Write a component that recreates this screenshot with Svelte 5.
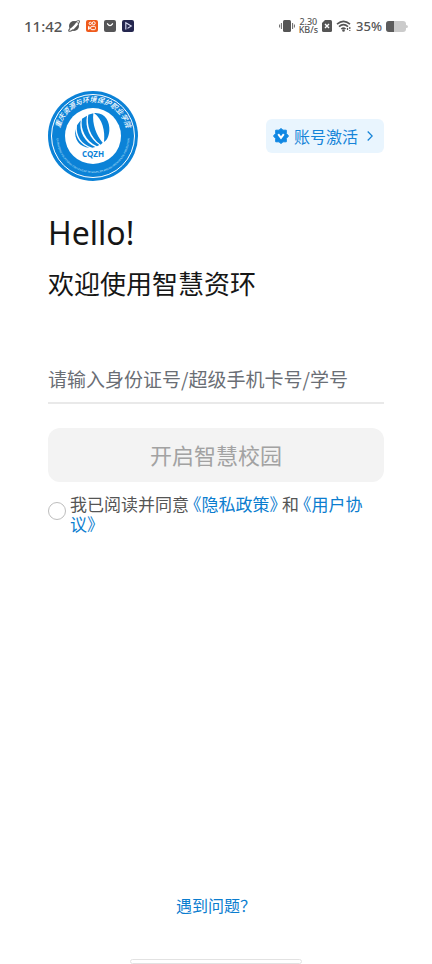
<script>
  let account = $state('');
  let agreed = $state(false);
  let ready = $derived(agreed && account.trim().length > 0);
</script>

<div class="screen">
  <header class="status">
    <div class="group">
      <span class="time">11:42</span>
      <svg width="12" height="12" viewBox="0 0 12 12" aria-hidden="true">
        <circle cx="6" cy="6" r="5" fill="#555" />
        <path d="M2 10Q5.500 8.500 9.500 3" fill="none" stroke="#fff" stroke-width="2.600" />
        <path d="M2 8.300Q.2 10.500.9 11.100 2 11.900 5 9.700M7.300 1.900Q10.800.1 11.300.9 11.800 1.700 10 4.400" fill="none" stroke="#555" stroke-width="1.100" />
      </svg>
      <svg width="12" height="12" viewBox="0 0 12 12" aria-hidden="true">
        <rect width="12" height="12" rx="2" fill="#ef5a1c" />
        <g fill="none" stroke="#fff"><circle cx="4.300" cy="3.400" r="1.200" /><circle cx="7.700" cy="3.200" r="1.500" /><rect x="4.800" y="6.300" width="4.600" height="3.400" rx="1" /><path d="M2.500 6.400v3l2-1.500z" /></g>
      </svg>
      <svg width="12" height="12" viewBox="0 0 12 12" aria-hidden="true">
        <rect width="12" height="12" rx="2" fill="#555557" />
        <path d="M3.500 3.800Q6 7.300 8.500 3.800" fill="none" stroke="#fff" stroke-width="1.300" stroke-linecap="round" />
      </svg>
      <svg width="12" height="12" viewBox="0 0 12 12" aria-hidden="true">
        <rect width="12" height="12" rx="2" fill="#24264f" />
        <path d="M3.800 9.500V2.800L9.300 6 5.500 8.400" fill="none" stroke="#d9dcf4" stroke-width="1.100" />
      </svg>
    </div>
    <div class="group right">
      <svg width="16" height="14" viewBox="0 0 16 14" aria-hidden="true">
        <rect x="4" y="1" width="8" height="12" rx="1.500" fill="#555" />
        <path d="M2.400 4v6M.6 5.500v3M13.600 4v6M15.400 5.500v3" stroke="#666" />
      </svg>
      <span class="speed"><b>2.30</b><b>KB/s</b></span>
      <svg width="10" height="12" viewBox="0 0 10 12" aria-hidden="true">
        <path d="M3 0h5.500Q10 0 10 1.500v9Q10 12 8.500 12h-7Q0 12 0 10.500V3z" fill="#555" />
        <path d="M3 4l4 4M7 4L3 8" stroke="#fff" stroke-width="1.400" />
      </svg>
      <svg width="16" height="12" viewBox="0 0 16 12" aria-hidden="true">
        <path d="M1 4.200Q7.500-1.500 14 4.200M3 6.700Q7.500 2.700 12 6.700M5.300 9Q7.500 7.200 9.500 9" fill="none" stroke="#555" stroke-width="1.600" />
        <circle cx="7.500" cy="10.500" r="1.300" fill="#555" />
        <path d="M11.500 8v3M13.800 7v4" stroke="#555" stroke-width="1.200" stroke-dasharray="2 1" />
      </svg>
      <span class="percent">35%</span>
      <svg width="22" height="11" viewBox="0 0 22 11" aria-hidden="true">
        <rect width="20" height="11" rx="3" fill="#cbcbcb" />
        <path d="M3 0h5v11H3Q0 11 0 8V3Q0 0 3 0" fill="#5c5c5c" />
        <path d="M20 4q2 0 2 1.500T20 7z" fill="#cbcbcb" />
      </svg>
    </div>
  </header>

  <main>
    <div class="brand">
      <svg width="90" height="90" viewBox="0 0 180 180" role="img" aria-label="CQZH">
        <defs>
          <path id="arc-top" d="M25 110A68 68 0 1 1 155 110" />
          <path id="arc-bottom" d="M19 74A73 73 0 1 0 161 74" />
        </defs>
        <circle cx="90" cy="90" r="90" fill="#0b82d7" />
        <circle cx="90" cy="90" r="83" fill="none" stroke="#fff" stroke-width="2" />
        <circle cx="90" cy="90" r="56" fill="#fff" />
        <text class="ring-cn"><textPath href="#arc-top" startOffset="50%" text-anchor="middle">重庆资源与环境保护职业学院</textPath></text>
        <text class="ring-en"><textPath href="#arc-bottom" startOffset="50%" text-anchor="middle">CHONGQING VOCATIONAL COLLEGE OF RESOURCES AND ENVIRONMENTAL PROTECTION</textPath></text>
        <g transform="translate(-16 -14) scale(.66667)" fill="#0b82d7">
          <path d="M162 87C195 84 210 112 208 140 206 160 200 168 192 174 196 140 187 105 162 87z" />
          <path d="M145 92L160 88C156 120 169 155 188 176L182 182C150 160 139 120 145 92z" />
          <path d="M126 104L141 95C134 130 150 165 178 183L171 187C137 170 120 135 126 104z" />
          <path d="M111 124L122 109C116 145 135 175 166 189L157 191C124 182 107 155 111 124z" />
          <path d="M106 135C108 165 124 182 148 191 120 190 101 167 106 135z" />
        </g>
        <text class="logo-name" x="90" y="132" text-anchor="middle">CQZH</text>
      </svg>
      <button class="activate" type="button">
        <svg width="16" height="16" viewBox="0 0 16 16" aria-hidden="true">
          <path d="M8 .5l2 1.700h3.300V5.500L15.500 8l-2.200 2.500v3.300H10L8 15.500l-2-1.700H2.700v-3.300L.5 8l2.200-2.500V2.200H6z" fill="#0f87e3" stroke="#0f87e3" stroke-linejoin="round" />
          <path d="M5.200 6.200L8 9.800l2.800-3.600" fill="none" stroke="#fff" stroke-width="2" />
        </svg>
        <span>账号激活</span>
        <svg class="chevron" width="6" height="10" viewBox="0 0 6 10" aria-hidden="true">
          <path d="M.7.500L5.200 5 .7 9.500" fill="none" stroke="#1684d8" stroke-width="1.300" />
        </svg>
      </button>
    </div>

    <h1>Hello!</h1>
    <h2>欢迎使用智慧资环</h2>

    <form onsubmit={(e) => e.preventDefault()}>
      <input class="account" type="text" bind:value={account} placeholder="请输入身份证号/超级手机卡号/学号" aria-label="请输入身份证号/超级手机卡号/学号" />
      <button class="submit" type="submit" disabled={!ready}>开启智慧校园</button>
      <div class="consent">
        <input id="agree" type="checkbox" bind:checked={agreed} />
        <label for="agree">我已阅读并同意<a href="#privacy"><span class="open">《</span>隐私政策<span class="close">》</span></a>和<a href="#terms"><span class="open">《</span>用户协议<span class="close">》</span></a></label>
      </div>
    </form>
  </main>

  <footer>
    <a href="#help">遇到问题？</a>
    <div class="home-bar"></div>
  </footer>
</div>

<style>
  :global(body) { margin: 0; background: #fff; }
  .screen { min-height: 100vh; box-sizing: border-box; display: flex; flex-direction: column; font-family: "Noto Sans CJK SC", sans-serif; color: #161616; }
  button, input { font: inherit; }
  svg { display: block; flex: none; }
  a { color: #0b7dcf; text-decoration: none; }

  .status { display: flex; justify-content: space-between; align-items: center; height: 52px; padding: 0 24px; color: #555; font-family: "Noto Sans", sans-serif; }
  .group { display: flex; align-items: center; gap: 6px; }
  .right { gap: 4px; }
  .time { font-size: 15px; font-weight: 500; }
  .speed { display: flex; flex-direction: column; font-size: 9px; line-height: 8px; text-align: center; }
  .speed b { font-weight: 500; }
  .percent { font-size: 13px; font-weight: 500; }

  main { padding: 39px 48px 0; }
  .brand { display: flex; justify-content: space-between; align-items: center; }
  .ring-cn { font-family: "Noto Sans CJK SC", sans-serif; font-size: 14px; font-style: italic; font-weight: 500; fill: #fff; }
  .ring-en { font-family: "Liberation Sans", sans-serif; font-size: 5px; fill: #d5ecfc; }
  .logo-name { font-family: "Open Sans", sans-serif; font-size: 16px; font-weight: 700; fill: #0b82d7; }
  .activate { display: flex; align-items: center; gap: 5px; height: 34px; padding: 0 11px 0 7px; border: 0; border-radius: 6px; background: #e9f5fe; color: #1684d8; font-size: 16px; }
  .chevron { margin-left: 4px; }

  h1 { margin: 28px 0 0; font-family: "Noto Sans", sans-serif; font-size: 32px; line-height: 48px; font-weight: 400; }
  h2 { margin: 6px 0 0; font-size: 26px; line-height: 40px; font-weight: 400; }

  .account { display: block; width: 100%; height: 50px; box-sizing: border-box; margin: 51px 0 24px; padding: 0; border: 0; border-bottom: 2px solid #e9e9e9; border-radius: 0; background: none; color: #161616; font-size: 19px; outline: none; }
  .account::placeholder { color: #6a6e75; opacity: 1; }
  .submit { display: block; width: 100%; height: 54px; padding: 0 0 2px; border: 0; border-radius: 12px; background: #0f87e3; color: #fff; font-size: 22px; }
  .submit:disabled { background: #f3f3f3; color: #a2a2a2; }

  .consent { display: flex; align-items: flex-start; gap: 4px; margin-top: 12px; font-size: 17px; line-height: 20px; color: #555; }
  .consent input { appearance: none; flex: none; width: 18px; height: 18px; margin: 8px 0 0; border: 1px solid #bdbdbd; border-radius: 50%; }
  .consent input:checked { border: 5px solid #0f87e3; }
  .open, .close { font-feature-settings: "halt"; }
  .open { padding-left: 4px; }
  .close { padding-right: 4px; }

  footer { display: flex; flex-direction: column; align-items: center; gap: 42px; margin-top: auto; }
  footer a { font-size: 16px; line-height: 24px; }
  .home-bar { width: 40%; height: 5px; box-sizing: border-box; border: 1px solid #e2e2e2; border-radius: 3px; }
</style>
